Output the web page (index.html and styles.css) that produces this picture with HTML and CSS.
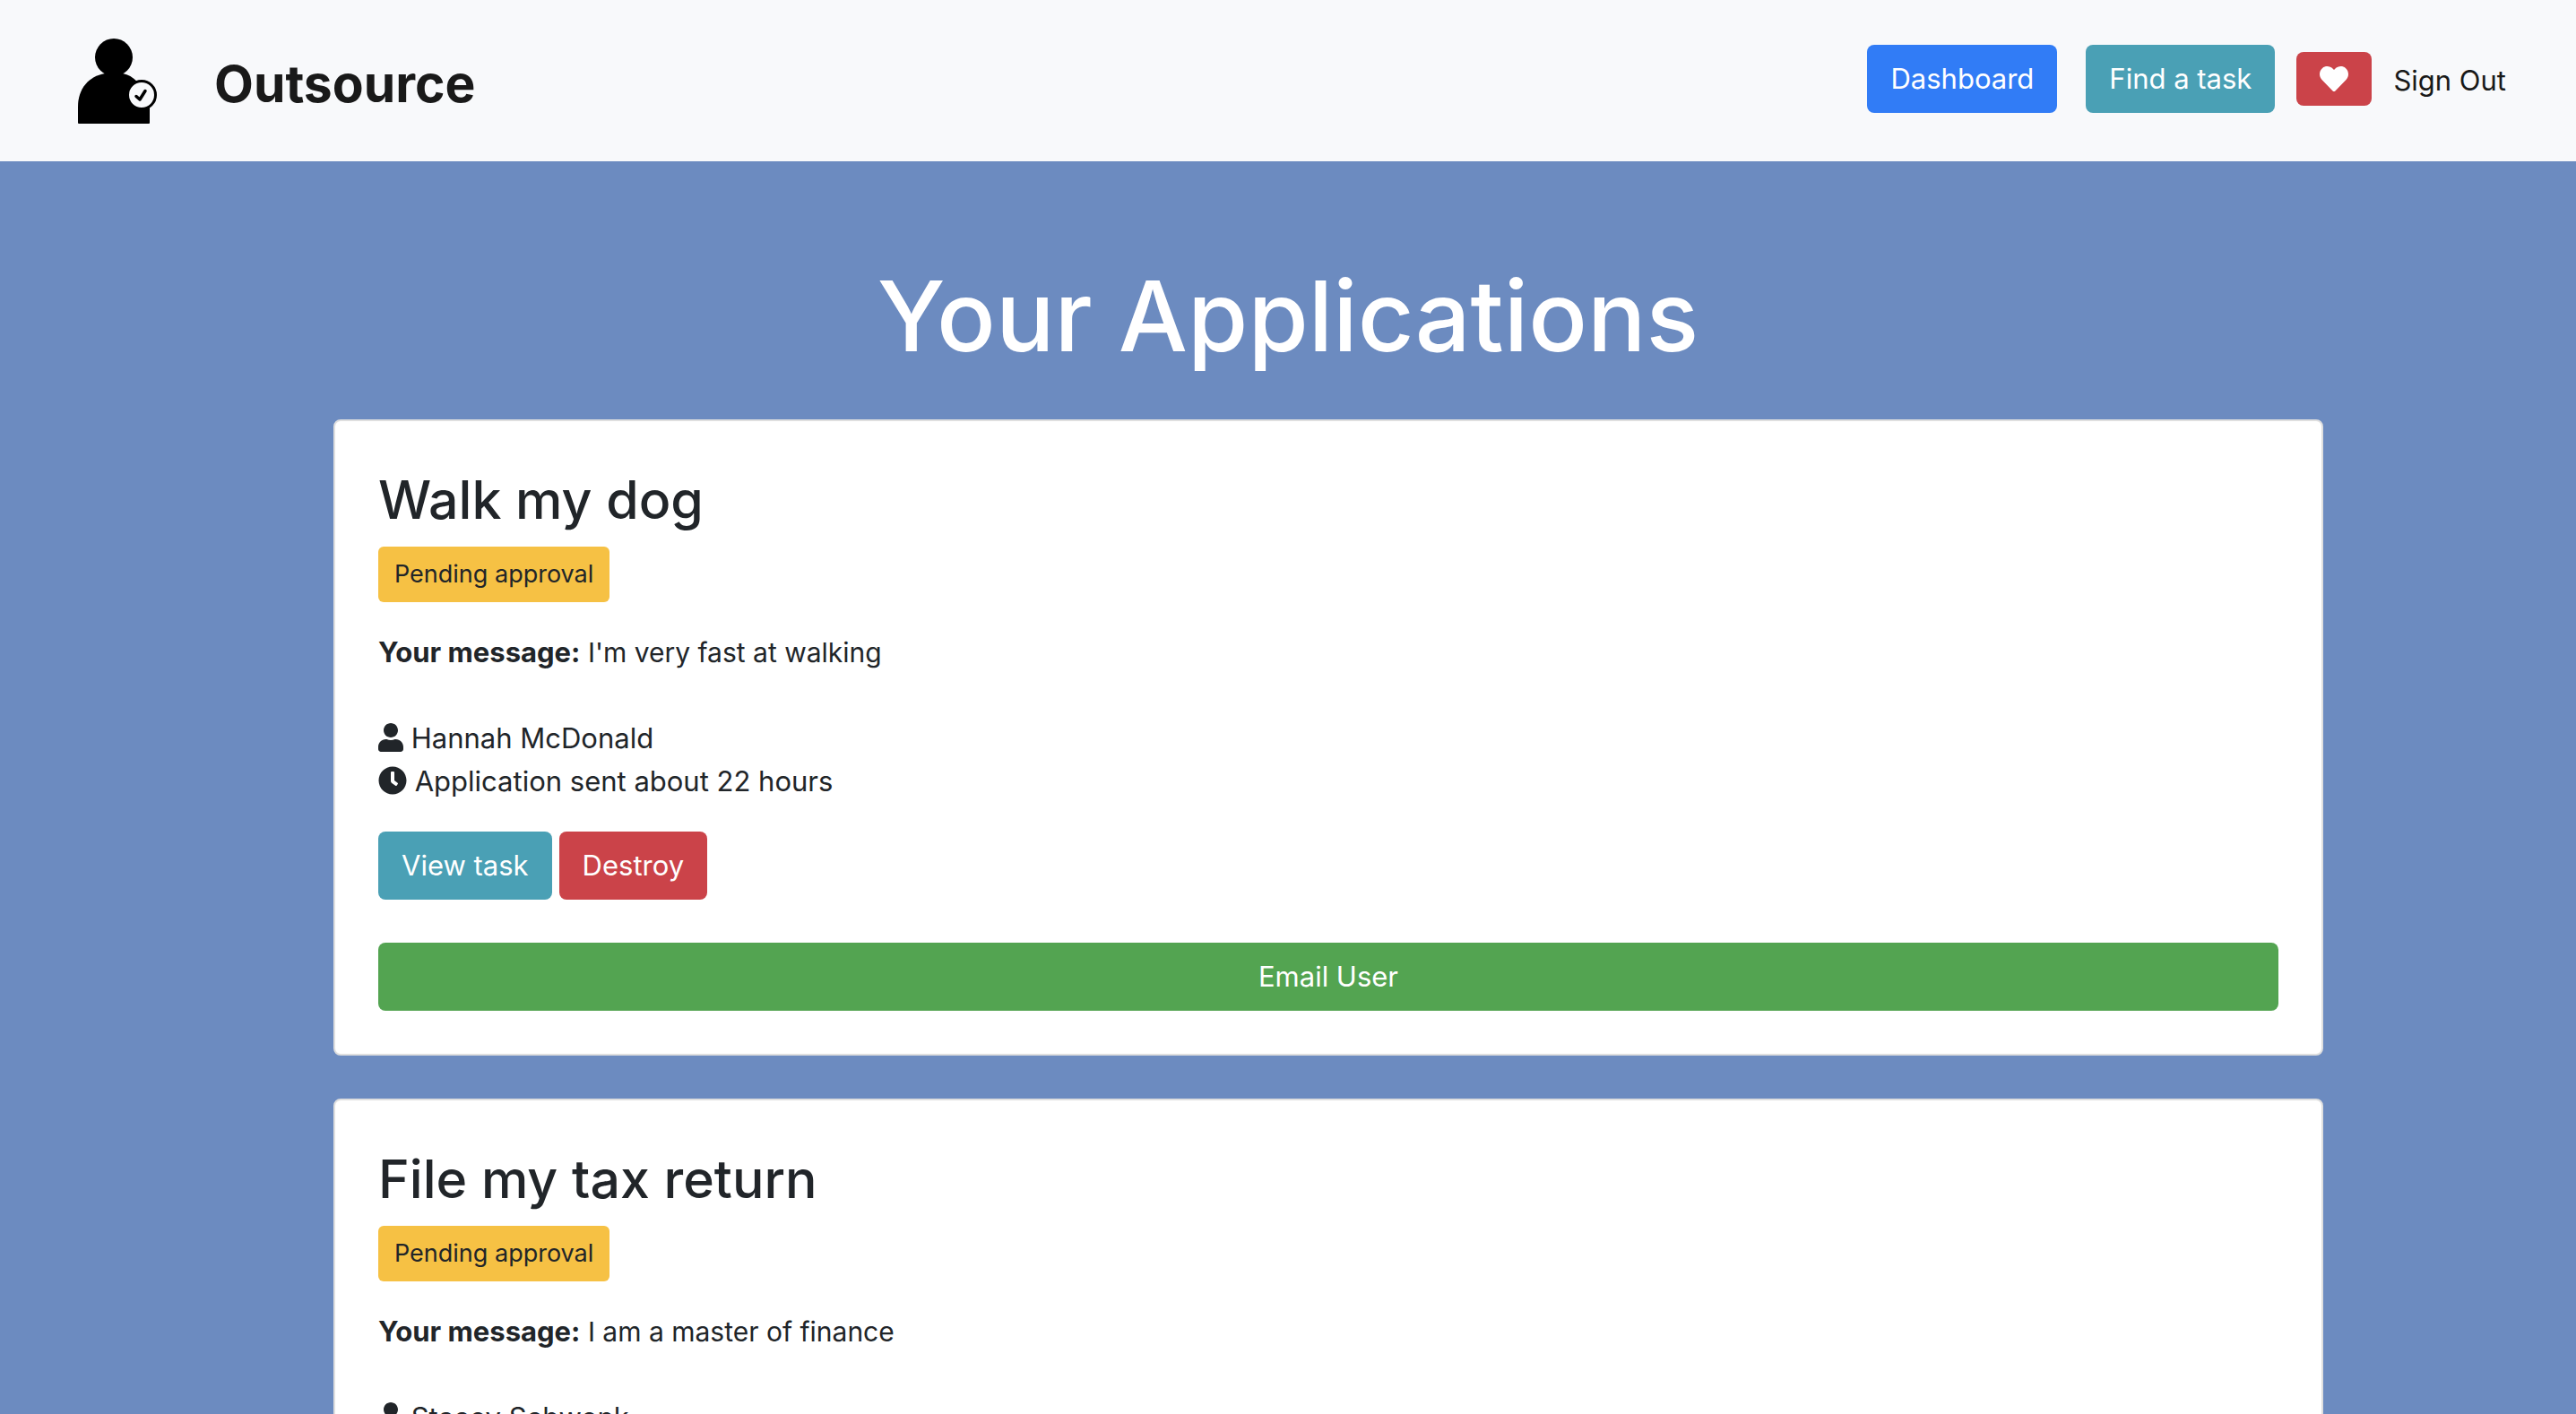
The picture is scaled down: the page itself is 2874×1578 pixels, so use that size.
FILE: index.html
```html
<!DOCTYPE html>
<html lang="en">
<head>
  <meta charset="utf-8">
  <title>Outsource</title>
  <link rel="stylesheet" href="styles.css">
</head>
<body>
  <svg class="sprite" aria-hidden="true">
    <symbol id="icon-user" viewBox="0 0 448 512"><path d="M224 256c70.700 0 128-57.300 128-128S294.700 0 224 0 96 57.300 96 128s57.300 128 128 128zm89.600 32h-16.700c-22.200 10.200-46.900 16-72.900 16s-50.600-5.800-72.900-16h-16.700C60.200 288 0 348.200 0 422.400V464c0 26.500 21.500 48 48 48h352c26.500 0 48-21.500 48-48v-41.600c0-74.200-60.200-134.400-134.400-134.400z"/></symbol>
    <symbol id="icon-clock" viewBox="0 0 512 512"><path d="M256 8C119 8 8 119 8 256s111 248 248 248 248-111 248-248S393 8 256 8zm92.490 313l-20 25a16 16 0 0 1-22.490 2.500l-67-49.720a40 40 0 0 1-15-31.230V112a16 16 0 0 1 16-16h32a16 16 0 0 1 16 16v144l58 42.500a16 16 0 0 1 2.490 22.500z"/></symbol>
    <symbol id="icon-heart" viewBox="0 0 512 512"><path d="M462.300 62.600C407.500 15.900 326 24.300 275.700 76.200L256 96.500l-19.700-20.300C186.100 24.300 104.500 15.900 49.700 62.600c-62.800 53.600-66.100 149.800-9.900 207.900l193.500 199.800c12.500 12.900 32.800 12.900 45.300 0l193.500-199.800c56.300-58.100 53-154.300-9.800-207.900z"/></symbol>
  </svg>

  <nav class="navbar">
    <a class="brand" href="#">
      <svg class="brand-logo" viewBox="0 0 88 96" aria-hidden="true">
        <circle cx="40" cy="21" r="21"/>
        <path d="M30 39 H50 C56 40 61 43 66 48 L80 75 V94 Q80 95 79 95 H1 Q0 95 0 94 V76 C0 56 12 42 30 39 Z"/>
        <circle cx="71" cy="63" r="15.500" fill="#f8f9fb" stroke="#000" stroke-width="3"/>
        <path d="M65 64.500 L69 68 L75 58.500" fill="none" stroke="#000" stroke-width="3.500" stroke-linecap="round" stroke-linejoin="round"/>
      </svg>
      <span class="brand-name">Outsource</span>
    </a>
    <div class="nav-links">
      <a class="btn btn-primary" href="#">Dashboard</a>
      <a class="btn btn-info btn-find" href="#">Find a task</a>
      <a class="btn btn-danger" href="#" aria-label="Favourites"><svg class="icon icon-block"><use href="#icon-heart"/></svg></a>
      <a class="nav-link" href="#">Sign Out</a>
    </div>
  </nav>

  <main class="applications">
    <h1 class="page-title">Your Applications</h1>
    <div class="card-list">
      <article class="card">
        <h2 class="card-title">Walk my dog</h2>
        <button class="btn btn-sm btn-warning" type="button">Pending approval</button>
        <p class="message"><strong>Your message:</strong> I'm very fast at walking</p>
        <p class="meta">
          <span class="meta-row"><svg class="icon icon-user"><use href="#icon-user"/></svg> Hannah McDonald</span>
          <span class="meta-row"><svg class="icon"><use href="#icon-clock"/></svg> Application sent about 22 hours</span>
        </p>
        <div class="actions">
          <a class="btn btn-info" href="#">View task</a>
          <button class="btn btn-danger" type="button">Destroy</button>
        </div>
        <a class="btn btn-success btn-block" href="#">Email User</a>
      </article>

      <article class="card">
        <h2 class="card-title">File my tax return</h2>
        <button class="btn btn-sm btn-warning" type="button">Pending approval</button>
        <p class="message"><strong>Your message:</strong> I am a master of finance</p>
        <p class="meta">
          <span class="meta-row"><svg class="icon icon-user"><use href="#icon-user"/></svg> Stacey Schwenk</span>
          <span class="meta-row"><svg class="icon"><use href="#icon-clock"/></svg> Application sent about 22 hours</span>
        </p>
        <div class="actions">
          <a class="btn btn-info" href="#">View task</a>
          <button class="btn btn-danger" type="button">Destroy</button>
        </div>
        <a class="btn btn-success btn-block" href="#">Email User</a>
      </article>
    </div>
  </main>
</body>
</html>
```
FILE: styles.css
```css
* { box-sizing: border-box; }

body {
  margin: 0;
  background: #6c8bc0;
  color: #212529;
  font-family: Inter, "Liberation Sans", sans-serif;
  font-size: 31px;
  line-height: 48px;
}

h1, h2, p { margin: 0; }

.sprite { display: none; }

/* Navigation */
.navbar {
  display: flex;
  justify-content: space-between;
  align-items: flex-start;
  min-height: 180px;
  padding: 43px 78px 0 87px;
  background: #f8f9fb;
}

.brand {
  display: flex;
  align-items: center;
  gap: 64px;
  color: #191919;
  text-decoration: none;
}

.brand-logo { width: 88px; height: 96px; }

.brand-name {
  padding-top: 6px;
  font-size: 57px;
  font-weight: 700;
  line-height: 72px;
}

.nav-links {
  display: flex;
  align-items: center;
  gap: 24px;
  padding-top: 7px;
}

.btn-find { margin-left: 8px; }

.nav-link {
  padding-top: 4px;
  color: #191919;
  text-decoration: none;
}

/* Buttons */
.btn {
  display: inline-block;
  padding: 14px 26px;
  border: 0;
  border-radius: 8px;
  color: #fff;
  font: inherit;
  text-align: center;
  text-decoration: none;
}

.btn-sm {
  padding: 10px 18px;
  border-radius: 6px;
  font-size: 27px;
  line-height: 42px;
}

.btn-block { display: block; }
.btn-primary { background: #317cf6; }
.btn-info { background: #4aa0b5; }
.btn-danger { background: #cb4349; }
.btn-success { background: #53a451; }
.btn-warning { background: #f6c144; color: #212529; }

/* Icons */
.icon {
  width: 32px;
  height: 32px;
  fill: currentColor;
  vertical-align: -4px;
}

.icon-user { width: 28px; }
.icon-block { display: block; }

/* Applications */
.applications { padding: 100px 48px 48px; }

.page-title {
  margin-bottom: 44px;
  color: #fff;
  font-size: 109px;
  font-weight: 500;
  line-height: 144px;
  text-align: center;
}

.card-list {
  display: grid;
  gap: 48px;
  max-width: 2310px;
  margin: 0 auto;
  padding-left: 90px;
}

.card {
  padding: 48px;
  border: 2px solid #dfdfdf;
  border-radius: 8px;
  background: #fff;
}

.card-title {
  margin-bottom: 12px;
  font-size: 59px;
  font-weight: 500;
  line-height: 80px;
}

.card .btn-sm { display: block; }

.message {
  margin: 32px 0 48px;
  font-size: 30px;
}

.message strong { font-size: 31px; }
.meta { margin-bottom: 32px; }
.meta-row { display: block; }

.actions {
  display: flex;
  gap: 8px;
  margin-bottom: 48px;
}
```
